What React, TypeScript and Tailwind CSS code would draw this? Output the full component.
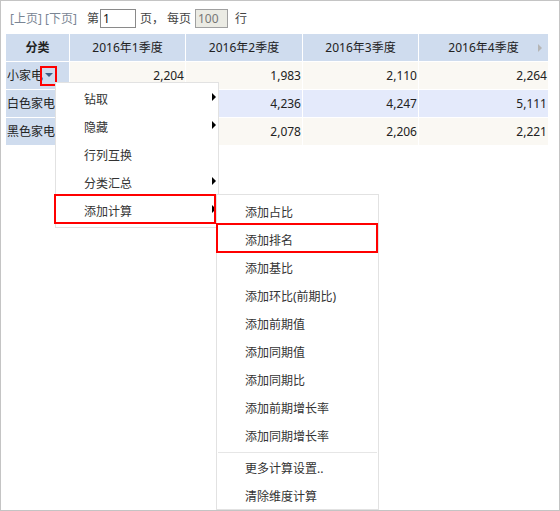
import React from "react";

const header = ["2016年1季度", "2016年2季度", "2016年3季度", "2016年4季度"];
const rows = [
  { name: "小家电", vals: ["2,204", "1,983", "2,110", "2,264"], bg: "bg-[#faf8f3]" },
  { name: "白色家电", vals: ["", "4,236", "4,247", "5,111"], bg: "bg-[#e4eafb]" },
  { name: "黑色家电", vals: ["", "2,078", "2,206", "2,221"], bg: "bg-[#faf8f3]" },
];

const menu1 = [
  { t: "钻取", arrow: true },
  { t: "隐藏", arrow: true },
  { t: "行列互换", arrow: false },
  { t: "分类汇总", arrow: true },
  { t: "添加计算", arrow: true },
];

const menu2a = [
  "添加占比",
  "添加排名",
  "添加基比",
  "添加环比(前期比)",
  "添加前期值",
  "添加同期值",
  "添加同期比",
  "添加前期增长率",
  "添加同期增长率",
];
const menu2b = ["更多计算设置..", "清除维度计算"];

function Arrow() {
  return (
    <span className="absolute right-[2px] top-[7px] h-0 w-0 border-y-[4px] border-l-[4px] border-y-transparent border-l-black" />
  );
}

export default function App() {
  return (
    <div className="relative h-[511px] w-[560px] overflow-hidden border border-[#c4c4c4] bg-white font-['Noto_Sans','Noto_Sans_CJK_SC',sans-serif] text-[12px] text-[#333]">
      {/* toolbar */}
      <div className="flex h-[19px] items-center pl-[9px] mt-[8px] whitespace-pre">
        <span className="text-[#7a8594]">[上页] [下页]</span>
        <span className="ml-[10px] text-[#444]">第</span>
        <div className="ml-[1px] flex h-[19px] w-[36px] items-center border border-[#8a8a8a] pl-[2px] text-[#111]">1</div>
        <span className="ml-[4px] text-[#444]">页，</span>
        <span className="ml-[3px] text-[#444]">每页</span>
        <div className="ml-[4px] flex h-[19px] w-[33px] items-center border border-[#a0a0a0] bg-[#ebebe4] pl-[2px] text-[#777]">100</div>
        <span className="ml-[7px] text-[#444]">行</span>
      </div>

      {/* table */}
      <div className="ml-[5px] mt-[6px] grid w-[542px] grid-cols-[63px_115px_116px_115px_129px] gap-px bg-white text-[#222]">
        <div className="flex h-[27px] items-center justify-center bg-[#cfdcee] font-bold">分类</div>
        {header.map((h, i) => (
          <div key={h} className="relative flex h-[27px] items-center justify-center bg-[#cfdcee]">
            {h}
            {i === 3 && (
              <span className="absolute right-[6px] top-[10px] h-0 w-0 border-y-[4px] border-l-[4px] border-y-transparent border-l-[#b5b5b5]" />
            )}
          </div>
        ))}
        {rows.map((r) => (
          <React.Fragment key={r.name}>
            <div className="flex h-[27px] items-center bg-[#cfdcee] pl-[1px]">{r.name}</div>
            {r.vals.map((v, j) => (
              <div key={j} className={`flex h-[27px] items-center justify-end pr-[1px] ${r.bg}`}>
                {v}
              </div>
            ))}
          </React.Fragment>
        ))}
      </div>

      {/* dropdown trigger with red highlight */}
      <div className="absolute left-[39px] top-[65px] flex h-[20px] w-[17px] items-center justify-center border-2 border-[#ff0000]">
        <span className="mt-[-2px] h-0 w-0 border-x-[4px] border-t-[4px] border-x-transparent border-t-[#3d5f87]" />
      </div>

      {/* first menu */}
      <div className="absolute left-[54px] top-[81px] w-[164px] border border-[#e2e2e2] bg-white pt-[3px] pb-[1px]">
        {menu1.map((m) => (
          <div key={m.t} className="relative flex h-[28px] items-center pl-[28px]">
            {m.t}
            {m.arrow && <Arrow />}
          </div>
        ))}
      </div>
      <div className="absolute left-[53px] top-[193px] h-[30px] w-[162px] border-2 border-[#ff0000]" />

      {/* submenu */}
      <div className="absolute left-[215px] top-[193px] h-[316px] w-[163px] border border-[#e2e2e2] bg-white pt-[4px]">
        {menu2a.map((t) => (
          <div key={t} className="flex h-[28px] items-center pl-[28px]">
            {t}
          </div>
        ))}
        <div className="mx-[1px] mt-[1px] mb-[2px] h-px bg-[#e6e6e6]" />
        {menu2b.map((t) => (
          <div key={t} className="flex h-[28px] items-center pl-[28px]">
            {t}
          </div>
        ))}
      </div>
      <div className="absolute left-[215px] top-[222px] h-[30px] w-[162px] border-2 border-[#ff0000]" />
    </div>
  );
}
